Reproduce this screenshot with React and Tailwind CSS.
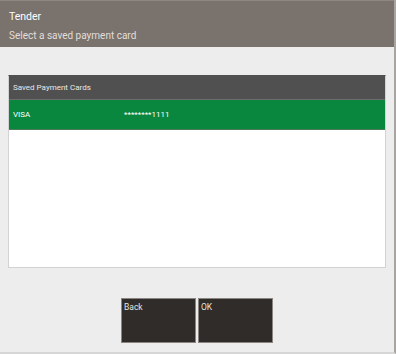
export default function App() {
  return (
    <div
      className="w-[396px] h-[354px] flex flex-col bg-[#ededed] border-r-2 border-b-2 border-r-[#a8a49f] border-b-[#d6d6d6] overflow-hidden"
      style={{ fontFamily: 'Roboto, "Noto Sans", sans-serif' }}
    >
      <div className="h-[47px] shrink-0 bg-[#7a726c] border-t border-[#8e8781] px-[9px] pt-[8px]">
        <div className="text-[10.5px] leading-[15px] text-white">Tender</div>
        <div className="mt-[4px] text-[10px] leading-[15px] text-[#e2deda]">Select a saved payment card</div>
      </div>

      <div className="flex-1 flex flex-col px-[8px] pt-[28px]">
        <div className="h-[193px] flex flex-col bg-white border border-[#d2d2d2] border-t-[#505050]">
          <div className="h-[24px] shrink-0 bg-[#505050] border-b border-[#6c6c6c] flex items-center px-[4px] text-[8px] text-[#e8e8e8]">
            Saved Payment Cards
          </div>
          <div className="h-[30px] shrink-0 bg-[#0a873e] border-b border-[#4d7a5b] flex items-center px-[4px] text-[8px] text-white">
            <span className="w-[111px]">VISA</span>
            <span>********1111</span>
          </div>
        </div>

        <div className="mt-[30px] flex justify-center gap-[2px]">
          <button className="w-[75px] h-[45px] bg-[#2f2c29] border border-[#8a8580] text-left px-[2px] pt-[2px] flex items-start text-[8.5px] text-[#e6e3df]">
            Back
          </button>
          <button className="w-[75px] h-[45px] bg-[#2f2c29] border border-[#8a8580] text-left px-[2px] pt-[2px] flex items-start text-[8.5px] text-[#e6e3df]">
            OK
          </button>
        </div>
      </div>
    </div>
  )
}
